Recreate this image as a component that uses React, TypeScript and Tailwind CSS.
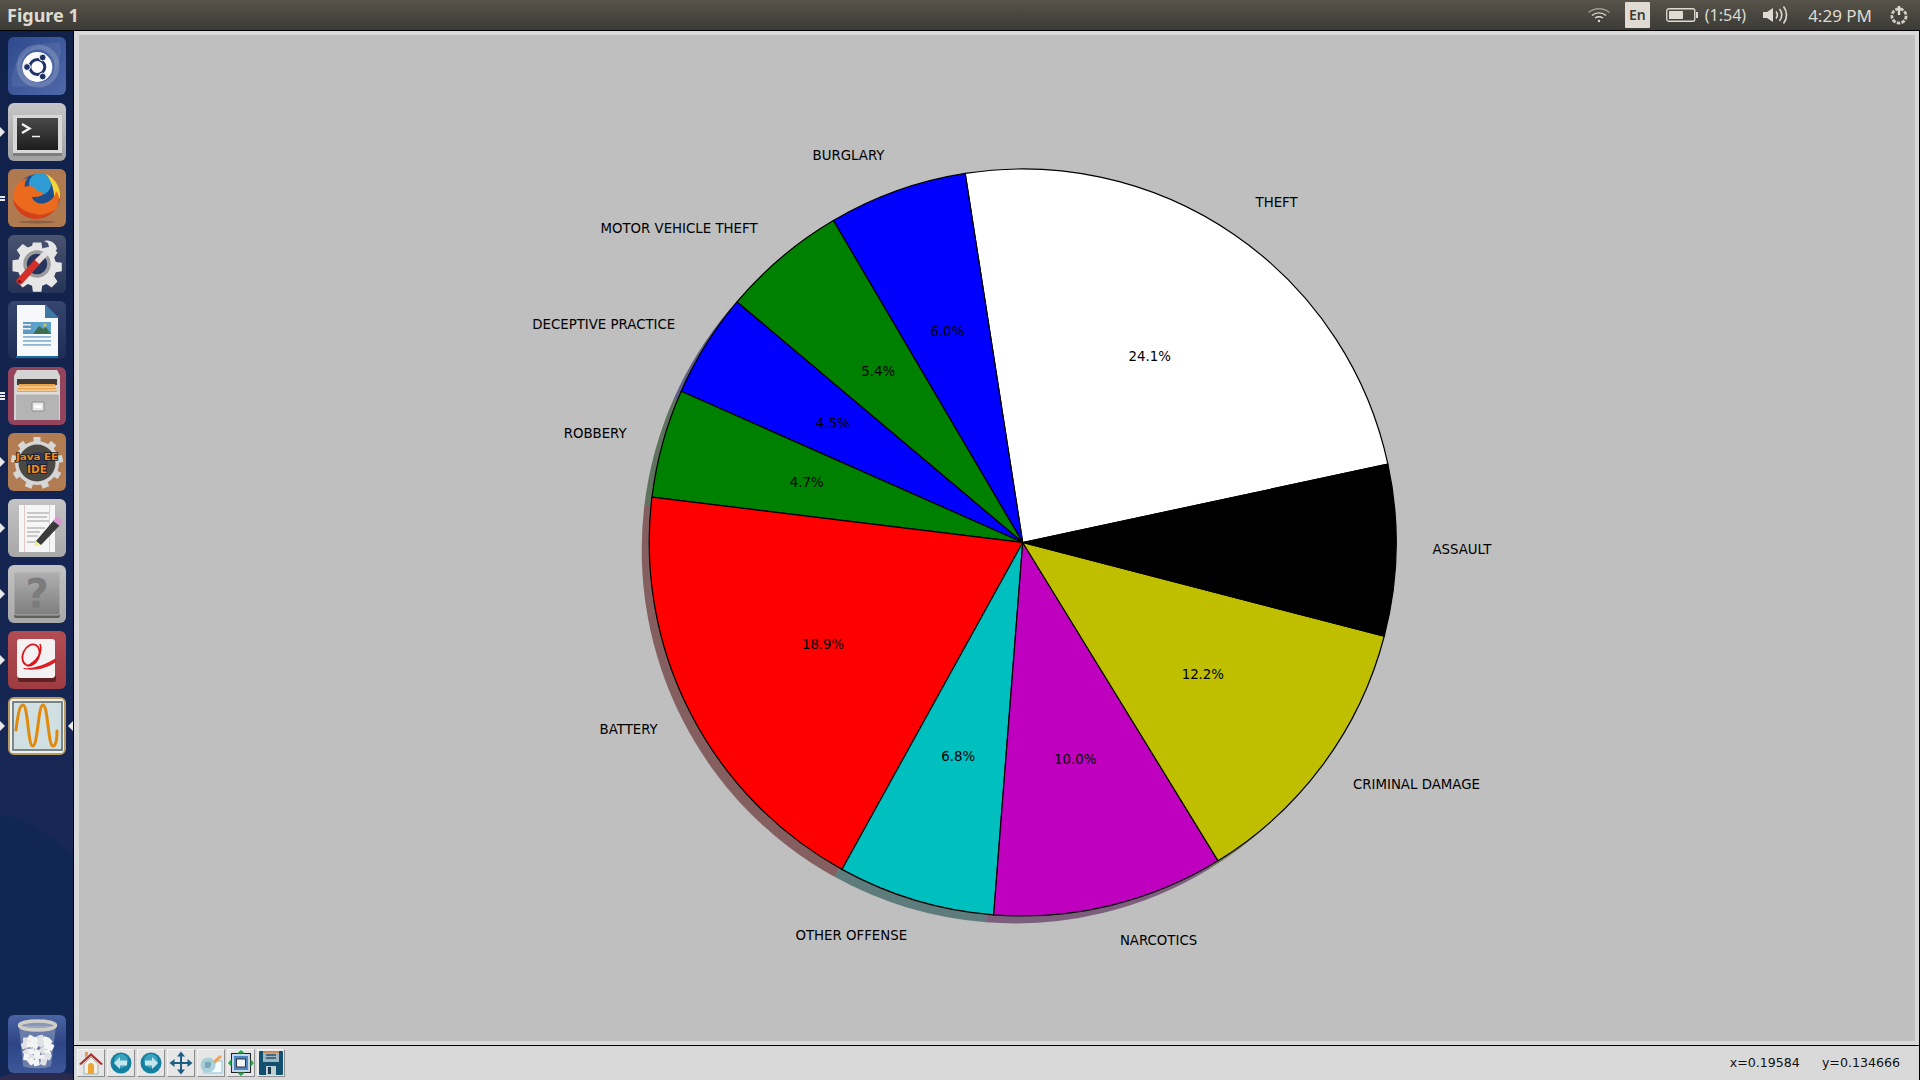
import type { ReactNode } from 'react';

const CX = 943.7;
const CY = 507.5;
const R = 373.5;
const START = 12.1;

const slices = [
  { label: 'THEFT', pct: 24.1, fill: '#ffffff', shadow: '#4c4c4c', nudge: 0, lift: 1 },
  { label: 'BURGLARY', pct: 6.0, fill: '#0000ff', shadow: '#00004c', nudge: 0, lift: 0 },
  { label: 'MOTOR VEHICLE THEFT', pct: 5.4, fill: '#008000', shadow: '#002600', nudge: 0, lift: 0 },
  { label: 'DECEPTIVE PRACTICE', pct: 4.5, fill: '#0000ff', shadow: '#00004c', nudge: 1, lift: 0 },
  { label: 'ROBBERY', pct: 4.7, fill: '#008000', shadow: '#002600', nudge: 0, lift: 0 },
  { label: 'BATTERY', pct: 18.9, fill: '#ff0000', shadow: '#4c0000', nudge: 1, lift: 0 },
  { label: 'OTHER OFFENSE', pct: 6.8, fill: '#00bfbf', shadow: '#003939', nudge: 2.5, lift: 1 },
  { label: 'NARCOTICS', pct: 10.0, fill: '#bf00bf', shadow: '#390039', nudge: 1, lift: 1 },
  { label: 'CRIMINAL DAMAGE', pct: 12.2, fill: '#bfbf00', shadow: '#393900', nudge: 0, lift: 2 },
  { label: 'ASSAULT', pct: 7.4, fill: '#000000', shadow: '#000000', nudge: -1, lift: 2 },
];

function polar(deg: number, r: number, ox = CX, oy = CY) {
  const a = (deg * Math.PI) / 180;
  return [ox + r * Math.cos(a), oy - r * Math.sin(a)];
}

function wedge(from: number, to: number, ox = CX, oy = CY) {
  const [x1, y1] = polar(from, R, ox, oy);
  const [x2, y2] = polar(to, R, ox, oy);
  const large = to - from > 180 ? 1 : 0;
  return `M${ox} ${oy}L${x1} ${y1}A${R} ${R} 0 ${large} 0 ${x2} ${y2}Z`;
}

function PieChart() {
  let angle = START;
  const parts = slices.map((s) => {
    const from = angle;
    const to = angle + (s.pct * 360) / 100;
    angle = to;
    return { ...s, from, to, mid: (from + to) / 2 };
  });
  return (
    <svg className="block h-full w-full" viewBox="0 0 1836 1006" style={{ fontFamily: '"DejaVu Sans", sans-serif' }}>
      {parts.map((p) => (
        <path key={`s-${p.label}`} d={wedge(p.from, p.to, CX - 7.5, CY + 7.5)} fill={p.shadow} fillOpacity={0.5} />
      ))}
      {parts.map((p) => (
        <path key={p.label} d={wedge(p.from, p.to)} fill={p.fill} stroke="#000" strokeWidth={1.2} strokeLinejoin="round" />
      ))}
      {parts.map((p) => {
        const [lx, ly] = polar(p.mid, R * 1.1);
        const [tx, ty] = polar(p.mid, R * 0.6);
        const left = Math.cos((p.mid * Math.PI) / 180) < 0;
        return (
          <g key={`t-${p.label}`} fontSize={13.33} fill="#000">
            <text x={lx + p.nudge} y={ly - p.lift} dominantBaseline="central" textAnchor={left ? 'end' : 'start'}>{p.label}</text>
            {p.label !== 'ASSAULT' && (
              <text x={tx} y={ty - (p.lift > 0 ? 1 : 0)} dominantBaseline="central" textAnchor="middle">{p.pct.toFixed(1)}%</text>
            )}
          </g>
        );
      })}
    </svg>
  );
}

function Tile({ bg, children, pip, pipCount = 1, activeRight, frame }: { bg: string; children: ReactNode; pip?: boolean; pipCount?: number; activeRight?: boolean; frame?: boolean }) {
  return (
    <div className="relative h-[58px] w-full">
      {pip && (
        <div className="absolute left-0 top-0 flex h-full flex-col justify-center gap-px">
          {pipCount === 1 ? (
            <span className="h-0 w-0 border-y-[5px] border-l-[5px] border-y-transparent border-l-[#e8e8e8]" />
          ) : (
            Array.from({ length: pipCount }).map((_, i) => <span key={i} className="h-[2px] w-[5px] bg-[#e8e8e8]" />)
          )}
        </div>
      )}
      {activeRight && (
        <span className="absolute right-0 top-[24px] h-0 w-0 border-y-[5px] border-r-[5px] border-y-transparent border-r-[#e8e8e8]" />
      )}
      <div className={`ml-[8px] h-[58px] w-[58px] overflow-hidden rounded-[6px] ${bg} ${frame ? 'border-2 border-[#b79a62]' : ''}`}>
        {children}
      </div>
    </div>
  );
}

function UbuntuIcon() {
  return (
    <svg viewBox="0 0 58 58" className="h-full w-full">
      <path d="M4 50C0 26 22 2 52 6c4 20-8 46-48 44z" fill="#fff" fillOpacity={0.07} />
      <circle cx="30" cy="29" r="19" fill="none" stroke="#fff" strokeOpacity={0.18} strokeWidth="5" />
      <circle cx="29.3" cy="30" r="15" fill="#fff" />
      <circle cx="29.3" cy="30" r="7.5" fill="none" stroke="#1f3368" strokeWidth="3" />
      <circle cx="34.7" cy="20.5" r="3.4" fill="#1f3368" stroke="#fff" />
      <circle cx="19" cy="30" r="3.4" fill="#1f3368" stroke="#fff" />
      <circle cx="34.7" cy="39.5" r="3.4" fill="#1f3368" stroke="#fff" />
    </svg>
  );
}

function TerminalIcon() {
  return (
    <svg viewBox="0 0 58 58" className="h-full w-full">
      <defs>
        <linearGradient id="termBg" x1="0" y1="0" x2="0" y2="1">
          <stop offset="0" stopColor="#4a4a4a" />
          <stop offset="1" stopColor="#1d1d1d" />
        </linearGradient>
      </defs>
      <rect x="5" y="12" width="49" height="41" rx="1" fill="#7e7e7e" />
      <rect x="5" y="12" width="49" height="38" fill="#d8d8d8" />
      <rect x="9" y="15" width="41" height="32" fill="url(#termBg)" />
      <path d="M14 21l7.5 4.5-7.5 4.5" fill="none" stroke="#f0f0f0" strokeWidth="2.4" />
      <path d="M24 33.5h8" stroke="#f0f0f0" strokeWidth="1.6" />
    </svg>
  );
}

function FirefoxIcon() {
  return (
    <svg viewBox="0 0 58 58" className="h-full w-full">
      <circle cx="30" cy="27" r="22" fill="#1c4f8d" />
      <circle cx="32" cy="15" r="11" fill="#2f9bd3" />
      <path d="M38 5c10 5 15 14 14 24l-6 4c1-10-2-20-8-28z" fill="#f5d33a" />
      <path d="M5 27C6 18 11 11 20 9c-3 3-4 6-3 9 4-2 9-1 11 3 2 2 7 1 7 4-2 3-7 3-11 3 1 4 6 8 13 6 6-2 10-6 11-12 4 4 4 12 0 18-5 7-15 10-24 7C11 44 4 36 5 27z" fill="#ec6a1e" />
      <path d="M5 30c1 10 10 20 23 20 8 0 15-4 19-10-5 4-12 7-20 5C17 43 9 38 5 30z" fill="#d4401a" />
      <ellipse cx="29" cy="53" rx="18" ry="1.5" fill="#000" fillOpacity={0.2} />
    </svg>
  );
}

function SettingsIcon() {
  return (
    <svg viewBox="0 0 58 58" className="h-full w-full">
      <defs>
        <linearGradient id="setBg" x1="0" y1="0" x2="0" y2="1">
          <stop offset="0" stopColor="#4a5470" />
          <stop offset="1" stopColor="#243357" />
        </linearGradient>
      </defs>
      <rect width="58" height="58" fill="url(#setBg)" />
      <g transform="translate(4.5 4) scale(0.85)">
        <path d="M24 4h10l1 7 5 2 6-4 7 7-4 6 2 5 7 1v10l-7 1-2 5 4 6-7 7-6-4-5 2-1 7H24l-1-7-5-2-6 4-7-7 4-6-2-5-7-1V25l7-1 2-5-4-6 7-7 6 4 5-2z" fill="#e6e6e6" />
      </g>
      <circle cx="29" cy="29" r="12" fill="#26355e" stroke="#9c9c9c" strokeWidth="3.5" />
      <path d="M12 46L31 25" stroke="#d42f28" strokeWidth="7" strokeLinecap="round" />
      <path d="M29 27L42 14" stroke="#e0e0e0" strokeWidth="6" />
      <path d="M36 6c6-2 12 2 13 8l-4 5c-5 1-9-2-10-6l6-1-1-4z" fill="#e6e6e6" />
      <circle cx="11.5" cy="46.5" r="1.5" fill="#7d1210" />
    </svg>
  );
}

function WriterIcon() {
  return (
    <svg viewBox="0 0 58 58" className="h-full w-full">
      <path d="M9 4h28l13 13v38H9z" fill="#f6f8f9" />
      <path d="M37 3l14 14H37z" fill="#3f7aa6" />
      <rect x="15" y="21" width="10" height="12" fill="#5e9cc7" />
      <rect x="25" y="21" width="18" height="12" fill="#5ca3cb" />
      <path d="M25 33l6-8 4 3 3-2 5 7z" fill="#3c6e4f" />
      <circle cx="37" cy="24" r="1.6" fill="#e8c24a" />
      <rect x="15" y="23" width="8" height="1.5" fill="#e8f1f7" />
      <rect x="15" y="27" width="8" height="1.5" fill="#e8f1f7" />
      <rect x="15" y="35" width="28" height="1.8" fill="#8db7d4" />
      <rect x="15" y="39" width="28" height="1.8" fill="#8db7d4" />
      <rect x="15" y="43" width="28" height="1.8" fill="#8db7d4" />
      <rect x="8" y="55" width="42" height="2" fill="#1b6ba5" />
    </svg>
  );
}

function FilesIcon() {
  return (
    <svg viewBox="0 0 58 58" className="h-full w-full">
      <path d="M9 3h40l3 6v44H6V9z" fill="#d4d4d4" />
      <rect x="9" y="12" width="40" height="6" fill="#3f3a33" />
      <path d="M11 17h36l2 8H9z" fill="#e9a24c" />
      <path d="M10 19.5h38v1.3H10zM9.5 22.5h39v1.2h-39z" fill="#f6d8a8" />
      <rect x="8" y="25" width="43" height="28" rx="1" fill="#b4b4b4" />
      <rect x="8" y="25" width="43" height="2.5" fill="#dedede" />
      <rect x="24" y="35" width="12" height="9" rx="1" fill="#e8e8e8" stroke="#8a8a8a" />
      <rect x="26.5" y="38" width="7" height="3" fill="#fff" />
    </svg>
  );
}

function EclipseIcon() {
  return (
    <svg viewBox="0 0 58 58" className="h-full w-full" style={{ fontFamily: '"DejaVu Sans", sans-serif' }}>
      <g fill="#d6d6d6">
        <circle cx="29" cy="30" r="22" />
        {[0, 40, 80, 120, 160, 200, 240, 280, 320].map((a) => (
          <rect key={a} x="25.5" y="4" width="7" height="8" transform={`rotate(${a} 29 30)`} />
        ))}
      </g>
      <circle cx="29" cy="30" r="18.5" fill="#4b4944" />
      <circle cx="29" cy="30" r="11" fill="#2e3a58" />
      <g fontWeight="700" fill="#ec8a1d" stroke="#1a1a1a" strokeWidth="1.6" style={{ paintOrder: 'stroke' }}>
        <text x="29" y="27" textAnchor="middle" fontSize="9.5" textLength="42" lengthAdjust="spacingAndGlyphs">Java EE</text>
        <text x="29" y="40" textAnchor="middle" fontSize="10.5">IDE</text>
      </g>
    </svg>
  );
}

function GeditIcon() {
  return (
    <svg viewBox="0 0 58 58" className="h-full w-full">
      <rect x="11" y="6" width="36" height="47" fill="#f6f6f6" />
      <rect x="16" y="6" width="1" height="47" fill="#e3c6c6" />
      <rect x="41" y="6" width="1" height="47" fill="#c6d6e8" />
      <path d="M19 14h22M19 18h20M19 22h22M19 29h18M19 33h13M19 37h11M19 43h11" stroke="#9a9a9a" strokeWidth="1.1" />
      <path d="M28 42L46 21l6 5-19 20z" fill="#3a3a3a" />
      <path d="M45 22l4-5 6 5-3 5z" fill="#d69ad0" />
      <path d="M28 42l-2 5 6-1z" fill="#f1ef86" />
    </svg>
  );
}

function HelpIcon() {
  return (
    <svg viewBox="0 0 58 58" className="h-full w-full" style={{ fontFamily: '"DejaVu Sans", sans-serif' }}>
      <defs>
        <linearGradient id="helpBook" x1="0" y1="0" x2="0" y2="1">
          <stop offset="0" stopColor="#b0b0b0" />
          <stop offset="1" stopColor="#7e7e7e" />
        </linearGradient>
      </defs>
      <rect x="6" y="8" width="46" height="45" rx="2" fill="#5f5f5f" />
      <rect x="6" y="7" width="46" height="43" rx="2" fill="url(#helpBook)" stroke="#bdbdbd" strokeWidth="0.8" />
      <text x="29" y="43" textAnchor="middle" fontSize="40" fontWeight="700" fill="#7c7c7c">?</text>
    </svg>
  );
}

function ViewerIcon() {
  return (
    <svg viewBox="0 0 58 58" className="h-full w-full">
      <rect x="10" y="44" width="38" height="7" rx="2" fill="#5f2123" />
      <rect x="9" y="8" width="38" height="39" rx="3" fill="#f3f1f1" />
      <ellipse cx="23" cy="24" rx="8" ry="11" fill="none" stroke="#d9141b" strokeWidth="1.8" transform="rotate(25 23 24)" />
      <path d="M15 37c10 1 22-3 33-10v4c-10 7-22 9-32 7z" fill="#de1c22" />
      <path d="M32 13c3 8-3 18-13 22" fill="none" stroke="#d9141b" strokeWidth="1.6" />
    </svg>
  );
}

function OctaveIcon() {
  return (
    <svg viewBox="0 0 54 54" className="h-full w-full">
      <rect width="54" height="54" fill="#eef0ee" />
      <rect x="3" y="3" width="49" height="48" fill="#cfdfe2" stroke="#7a8588" strokeWidth="2" />
      <path d="M6 31C8 14 10 6 13 6C18 6 18 47 22.7 47C28 47 28 6 33 6C38 6 38 47 43 47C45.5 47 47 42 47 32" fill="none" stroke="#e08a0c" strokeWidth="3" strokeLinecap="round" />
    </svg>
  );
}

function TrashIcon() {
  const bits = [[18, 25], [23, 23], [28, 25], [33, 23], [38, 25], [41, 27], [17, 31], [22, 30], [27, 31], [33, 29], [38, 31], [42, 32], [18, 37], [23, 36], [29, 37], [35, 35], [40, 37], [19, 42], [24, 43], [30, 42], [36, 43], [40, 42], [23, 47], [28, 48], [35, 47]];
  return (
    <svg viewBox="0 0 58 58" className="h-full w-full">
      <path d="M11 11l4 40c3 3 25 3 28 0l5-40z" fill="#a9b3c9" fillOpacity={0.45} />
      {bits.map(([x, y], i) => (
        <rect key={i} x={x - 3} y={y - 2.5} width="6.5" height="6" rx="1" fill={i % 3 === 0 ? '#dfe1e3' : '#f3f4f4'} transform={`rotate(${i * 27} ${x} ${y})`} />
      ))}
      <ellipse cx="29.5" cy="10.5" rx="18" ry="4.5" fill="#c9ccd0" fillOpacity={0.55} stroke="#cfcfc8" strokeWidth="3.5" />
    </svg>
  );
}

function ToolButton({ children }: { children: ReactNode }) {
  return (
    <div className="h-[28px] w-[28px] border border-t-[#f4f4f4] border-l-[#f4f4f4] border-r-[#8e8e8e] border-b-[#8e8e8e] bg-[#e6e6e6]">
      <svg viewBox="0 0 26 26" className="h-full w-full">{children}</svg>
    </div>
  );
}

function Toolbar() {
  return (
    <div className="flex items-center gap-[2px]">
      <ToolButton>
        <path d="M7 8V2h3v3z" fill="#e59955" />
        <path d="M1 14L13 3l12 11-2 1-10-9-10 9z" fill="#a9302f" />
        <path d="M6 14l7-7 7 7v10H6z" fill="#f4f0e4" stroke="#98b3b5" />
        <path d="M10 24v-8a3 3 0 016 0v8z" fill="#efa43a" />
      </ToolButton>
      <ToolButton>
        <circle cx="13" cy="13" r="10.5" fill="#147f9f" />
        <circle cx="13" cy="11" r="7" fill="#3aa3bd" />
        <path d="M6 13l6-6v3.5h7v5h-7V19z" fill="#c7e5ec" />
      </ToolButton>
      <ToolButton>
        <circle cx="13" cy="13" r="10.5" fill="#147f9f" />
        <circle cx="13" cy="11" r="7" fill="#3aa3bd" />
        <path d="M20 13l-6-6v3.5H7v5h7V19z" fill="#c7e5ec" />
      </ToolButton>
      <ToolButton>
        <path d="M13 1.5l4 5h-3V12h5.5V9l5 4-5 4v-3H14v5.5h3l-4 5-4-5h3V14H6.5v3l-5-4 5-4v3H12V6.500H9z" fill="#1d5f84" />
      </ToolButton>
      <ToolButton>
        <rect x="6" y="11" width="18" height="12" fill="#f4fbfd" stroke="#8cc5d6" />
        <path d="M14 12L22 5l2 2-7 7z" fill="#eca55a" />
        <circle cx="10" cy="15" r="7.5" fill="#9fcbd6" fillOpacity={0.85} />
        <path d="M7 13h6M7 15h6M7 17h5" stroke="#4b7f90" />
      </ToolButton>
      <ToolButton>
        <rect x="3.5" y="3.5" width="19" height="19" fill="#c4d7e8" stroke="#222" />
        <rect x="6" y="6" width="14" height="14" fill="#4c87c4" />
        <rect x="8.5" y="9" width="9" height="8" fill="#f3f3f3" stroke="#333" />
        <path d="M13 0l4 3.5H9zM13 26l-4-3.5h8zM0 13l3.5-4v8zM26 13l-3.5 4V9z" fill="#28a84a" />
      </ToolButton>
      <ToolButton>
        <rect x="1" y="1" width="24" height="24" rx="1" fill="#12506f" />
        <rect x="5" y="1" width="16" height="11" fill="#9eb4c1" />
        <rect x="5" y="1" width="16" height="2" fill="#cc8a5c" />
        <path d="M8 5h10M8 8h10" stroke="#28536c" strokeWidth="1.4" />
        <rect x="8" y="16" width="10" height="9" fill="#bfcdd5" />
        <rect x="10" y="17" width="3" height="7" fill="#17384d" />
      </ToolButton>
    </div>
  );
}

export default function App() {
  return (
    <div className="flex h-screen w-screen flex-col overflow-hidden bg-[#d9d9d9]" style={{ fontFamily: '"Noto Sans", sans-serif' }}>
      <header className="flex h-[30px] shrink-0 items-center justify-between bg-gradient-to-b from-[#57534a] to-[#3c3b37] pl-[7px] pr-[11px] text-[#dfdbd2]">
        <span className="text-[18px] font-bold leading-none">Figure 1</span>
        <div className="flex items-center text-[16px] leading-none">
          <svg viewBox="0 0 24 16" className="mr-[14px] h-[16px] w-[24px]" fill="none" stroke="#dfdbd2" strokeWidth="1.4">
            <path d="M1.5 5.5c6-5 15-5 21 0" strokeOpacity={0.55} />
            <path d="M5 8.5c4-3.5 10-3.500 14 0" />
            <path d="M8 11c3-2 5-2 8 0" />
            <circle cx="12" cy="14" r="1.2" fill="#dfdbd2" stroke="none" />
          </svg>
          <span className="mr-[16px] flex h-[26px] w-[25px] items-center justify-center rounded-[1px] bg-[#dfdbd2] text-[14px] font-semibold text-[#3c3b37]">En</span>
          <svg viewBox="0 0 32 14" className="mr-[7px] h-[14px] w-[32px]">
            <rect x="0.75" y="0.75" width="28" height="12.5" rx="2" fill="none" stroke="#dfdbd2" strokeWidth="1.3" />
            <rect x="3" y="3" width="14" height="8" rx="0.5" fill="#dfdbd2" />
            <rect x="30" y="4" width="2" height="6" fill="#dfdbd2" />
          </svg>
          <span className="mr-[16px]">(1:54)</span>
          <svg viewBox="0 0 26 20" className="mr-[20px] h-[20px] w-[26px]" fill="none" stroke="#dfdbd2" strokeWidth="1.6">
            <path d="M1 7h4l6-4v14l-6-4H1z" fill="#dfdbd2" stroke="none" />
            <path d="M14 6.5c1.5 2 1.5 5 0 7" />
            <path d="M17.5 4c3 3.5 3 8.5 0 12" />
            <path d="M21.5 1.5c4 5 4 12 0 17" />
          </svg>
          <span className="mr-[17px] text-[17px]">4:29 PM</span>
          <svg viewBox="0 0 20 20" className="h-[20px] w-[20px]" fill="none" stroke="#dfdbd2">
            <circle cx="10" cy="11" r="6.5" strokeDasharray="3.2 1.2" strokeWidth="4" strokeOpacity={0.9} />
            <circle cx="10" cy="11" r="4.5" stroke="#45433d" strokeWidth="2.5" />
            <path d="M10 1v9" strokeWidth="2.4" />
          </svg>
        </div>
      </header>
      <div className="flex min-h-0 flex-1 border-t border-black">
        <aside className="relative flex w-[73px] shrink-0 flex-col overflow-hidden bg-gradient-to-b from-[#0f2049] to-[#1a2a5a] pb-[7px] pt-[6px]">
          <svg viewBox="0 0 73 265" className="absolute bottom-0 left-0 h-[265px] w-[73px]">
            <path d="M0 0c25 2 55 25 73 40v225H0z" fill="#122654" />
            <path d="M0 262c20-8 50-6 73-3v6H0z" fill="#2a2b4f" />
          </svg>
          <div className="relative flex flex-col gap-[8px]">
            <Tile bg="bg-gradient-to-br from-[#2f4b8f] to-[#4e68a8]"><UbuntuIcon /></Tile>
            <Tile bg="bg-gradient-to-b from-[#c6c6c6] to-[#a1a1a1]" pip><TerminalIcon /></Tile>
            <Tile bg="bg-[#b07a50]" pip pipCount={2}><FirefoxIcon /></Tile>
            <Tile bg="bg-[#2f3d60]"><SettingsIcon /></Tile>
            <Tile bg="bg-gradient-to-b from-[#35456d] to-[#1d2d55]"><WriterIcon /></Tile>
            <Tile bg="bg-[#93445c]" pip pipCount={3}><FilesIcon /></Tile>
            <Tile bg="bg-[#b27c52]" pip><EclipseIcon /></Tile>
            <Tile bg="bg-gradient-to-b from-[#c3c3c3] to-[#a8a8a8]" pip><GeditIcon /></Tile>
            <Tile bg="bg-gradient-to-b from-[#c3c3c3] to-[#a8a8a8]" pip><HelpIcon /></Tile>
            <Tile bg="bg-gradient-to-b from-[#b14d53] to-[#9e3c42]" pip><ViewerIcon /></Tile>
            <Tile bg="bg-[#eef0ee]" pip activeRight frame><OctaveIcon /></Tile>
          </div>
          <div className="relative mt-auto">
            <Tile bg="bg-gradient-to-b from-[#4a63a3] via-[#2d4585] to-[#3d5799]"><TrashIcon /></Tile>
          </div>
        </aside>
        <main className="flex min-w-0 flex-1 flex-col border-x border-black">
          <div className="min-h-0 flex-1 border-[4px] border-l-[5px] border-[#d9d9d9] bg-[#bfbfbf]">
            <PieChart />
          </div>
          <footer className="flex h-[35px] shrink-0 items-start justify-between border-t border-black bg-[#d9d9d9] pl-[3px] pr-[19px] pt-[3px]">
            <Toolbar />
            <div className="flex gap-[22px] pt-[5px] text-[12.6px] text-[#111]" style={{ fontFamily: '"DejaVu Sans", sans-serif' }}>
              <span>x=0.19584</span>
              <span>y=0.134666</span>
            </div>
          </footer>
        </main>
      </div>
    </div>
  );
}
